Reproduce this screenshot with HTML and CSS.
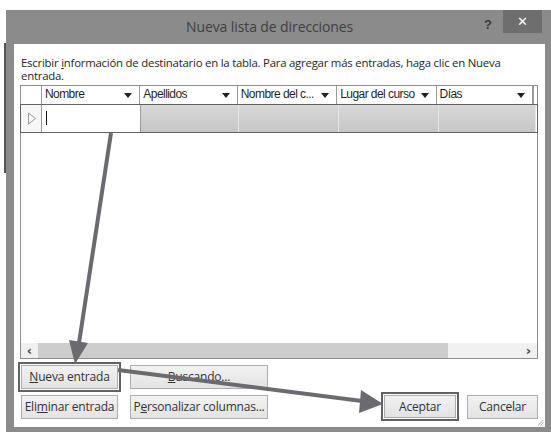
FILE: index.html
```html
<!DOCTYPE html>
<html lang="es">
<head>
  <meta charset="utf-8">
  <title>Nueva lista de direcciones</title>
  <link rel="stylesheet" href="styles.css">
</head>
<body>

<div class="window">
  <div class="titlebar">
    <span class="title">Nueva lista de direcciones</span>
    <span class="help">?</span>
    <span class="close">&#x2715;</span>
  </div>

  <div class="content">
    <p class="intro">Escribir <u>i</u>nformación de destinatario en la tabla. Para agregar más entradas, haga clic en Nueva entrada.</p>

    <div class="grid">
      <div class="row head">
        <div class="cell rh"></div>
        <div class="cell c1">Nombre<i class="dd"></i></div>
        <div class="cell c2">Apellidos<i class="dd"></i></div>
        <div class="cell c3">Nombre del c...<i class="dd"></i></div>
        <div class="cell c4">Lugar del curso<i class="dd"></i></div>
        <div class="cell c5">Días<i class="dd"></i></div>
        <div class="cell rest"></div>
      </div>
      <div class="row data">
        <div class="cell rh">
          <svg width="10" height="13" viewBox="0 0 10 13"><path d="M1.5 1 L8.5 6.5 L1.5 12 Z" fill="none" stroke="#9a9a9a"/></svg>
        </div>
        <div class="cell c1 edit"><span class="caret"></span></div>
        <div class="cell c2 sel"></div>
        <div class="cell c3 sel"></div>
        <div class="cell c4 sel"></div>
        <div class="cell c5 sel"></div>
        <div class="cell rest"></div>
      </div>
      <div class="empty"></div>
      <div class="hscroll">
        <span class="sarrow">&#x2039;</span>
        <span class="thumb"></span>
        <span class="track"></span>
        <span class="sarrow">&#x203A;</span>
      </div>
    </div>

    <div class="actions">
      <div class="btn-grid">
        <button class="btn mark"><u>N</u>ueva entrada</button>
        <button class="btn"><u>B</u>uscando...</button>
        <button class="btn">Eli<u>m</u>inar entrada</button>
        <button class="btn">P<u>e</u>rsonalizar columnas...</button>
      </div>
      <div class="btn-right">
        <button class="btn ok mark">Aceptar</button>
        <button class="btn cancel">Cancelar</button>
      </div>
    </div>

    <svg class="grip" width="7" height="7" viewBox="0 0 7 7">
      <path d="M6.5 1 L1 6.5 M6.5 3.5 L3.5 6.5 M6.5 6 L6 6.5" stroke="#b0b0b0" stroke-width="1"/>
    </svg>
  </div>
</div>

<!-- tutorial annotation arrows -->
<svg class="arrows" width="551" height="432" viewBox="0 0 551 432">
  <g fill="#6a6a70" stroke="#6a6a70">
    <line x1="111" y1="133" x2="79" y2="343" stroke-width="4"/>
    <polygon points="75,364 69,340 88,343" stroke="none"/>
    <line x1="118" y1="370" x2="362" y2="401" stroke-width="4"/>
    <polygon points="383,404 361,390 359,413" stroke="none"/>
  </g>
</svg>

</body>
</html>
```

FILE: styles.css
```css
:root { --frame:#8b8b8b; --mark:#626262; --line:#9a9a9a; --ui:"Open Sans","Noto Sans",sans-serif; }
body{margin:0;height:432px;overflow:hidden;position:relative;
     background:linear-gradient(#555,#555) no-repeat 4px 43px / 2px 130px, #fff;
     font:12px/1.2 var(--ui);color:#333}

.window{margin:10px 0 0 6px;width:545px;height:422px;background:var(--frame);
        display:flex;flex-direction:column}
.titlebar{height:34px;display:flex;align-items:flex-start;flex:none}
.title{margin:9px 0 0 180px;font-size:14px;color:#404040;letter-spacing:-.1px}
.help{margin:5px 0 0 auto;font:bold 13px/1 "Liberation Sans",sans-serif;color:#3a3a3a;padding-top:3px}
.close{margin:0 9px 0 11px;width:39px;height:23px;background:#6e6e6e;color:#fff;
       display:grid;place-content:center;font:13px/1 "DejaVu Sans",sans-serif}

.content{flex:1;margin:0 6px 5px 8px;background:#fff;padding:12px 7px 0 6px;
         position:relative;display:flex;flex-direction:column}
.intro{margin:0 0 3px 1px;font-size:11.4px;line-height:13px;letter-spacing:-.23px;color:#262626}

/* grid */
.grid{height:272px;border:1px solid #8e8e8e;display:flex;flex-direction:column}
.row{display:flex;flex:none}
.cell{position:relative;border-right:1px solid var(--line);box-sizing:border-box}
.rh{width:21px}
.c1{width:99px}.c2{width:98px}.c3{width:100px}.c4{width:100px}.c5{width:97px}
.rest{flex:1;border-right:none}
.head{height:18px;border-bottom:1px solid #8a8a8a}
.head .cell{font:12px/17px "Liberation Sans",sans-serif;letter-spacing:-.55px;
            color:#1f1f1f;padding-left:3px}
.head .rest{border-left:1px solid var(--line)}
.dd{position:absolute;right:7px;top:7px;width:0;height:0;
    border-left:4px solid transparent;border-right:4px solid transparent;border-top:5px solid #222}
.data{height:27px;outline:2px solid var(--mark);outline-offset:-1px;position:relative}
.data .rh{display:grid;place-content:center;padding-left:2px;background:#f7f7f7}
.edit{background:#fff}
.caret{position:absolute;left:4px;top:6px;height:14px;border-left:1px solid #111}
.sel{background:linear-gradient(#d8d8d8,#c6c6c6);border-right:1px solid #e6e6e6}
.data .rest{background:#fff}
.empty{flex:1;border-top:1px solid #d0d0d0}
.hscroll{height:15px;display:flex;align-items:center;background:#f0f0f0}
.sarrow{width:17px;text-align:center;font:bold 13px/15px "DejaVu Sans",sans-serif;color:#444}
.thumb{width:410px;height:15px;background:#cdcdcd}
.track{flex:1}

/* buttons */
.actions{display:flex;justify-content:space-between;align-items:flex-end;margin-top:6px}
.btn-grid{display:grid;grid-template-columns:97px 138px;gap:6px 12px;margin-left:1px}
.btn{height:24px;padding:0;border:1px solid #adadad;background:linear-gradient(#f2f2f2,#e3e3e3);
     font:12px/1 var(--ui);color:#333;letter-spacing:-.2px}
.btn.mark{outline:2px solid var(--mark);outline-offset:1px}
.btn-right{display:flex;gap:11px}
.ok{width:72px;height:23px;margin-bottom:1px}
.cancel{width:71px}
.grip{position:absolute;right:1px;bottom:1px}

.arrows{position:absolute;left:0;top:0;pointer-events:none}
```
